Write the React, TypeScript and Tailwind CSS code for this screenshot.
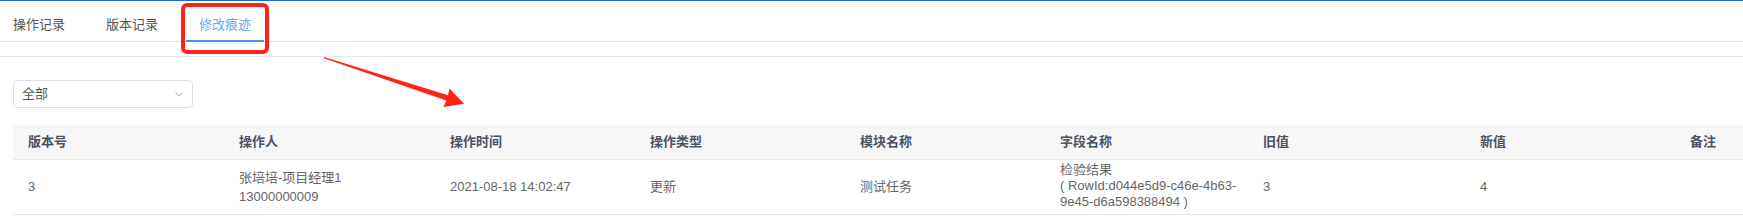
import React from "react";

const cols = [
  "版本号",
  "操作人",
  "操作时间",
  "操作类型",
  "模块名称",
  "字段名称",
  "旧值",
  "新值",
  "备注",
];

export default function App() {
  const font = { fontFamily: '"Liberation Sans", "Noto Sans CJK SC", sans-serif' };
  return (
    <div
      className="relative w-[1743px] h-[218px] bg-white overflow-hidden text-[13px]"
      style={font}
    >
      <div className="h-px bg-[#1a6fd6]" />
      {/* tabs */}
      <div className="flex h-[41px] border-b border-[#e2e2e2] gap-[15px]">
        <div className="h-full px-[13px] pt-[14px] leading-[20px] text-[#555]">操作记录</div>
        <div className="h-full px-[13px] pt-[14px] leading-[20px] text-[#555]">版本记录</div>
        <div className="relative h-full px-[13px] pt-[14px] leading-[20px] text-[#6ea4f2]">
          修改痕迹
          <div className="absolute left-0 right-0 bottom-[-1px] h-[2px] bg-[#4a94f0]" />
        </div>
      </div>
      <div className="h-[14px]" />
      <div className="h-px bg-[#e6e6e6]" />

      {/* select */}
      <div className="pl-[13px] pt-[23px]">
        <div className="flex items-center justify-between w-[180px] h-[28px] border border-[#dcdfe6] rounded-[4px] pl-[8px] pr-[9px]">
          <span className="text-[#555] leading-[20px]">全部</span>
          <svg width="8" height="5" viewBox="0 0 8 5" className="mt-[1px]">
            <path d="M0.5 0.5 L4 4 L7.5 0.5" fill="none" stroke="#a8abb2" strokeWidth="1" />
          </svg>
        </div>
      </div>

      {/* table */}
      <div className="ml-[13px] mt-[17px]">
        <div className="grid grid-cols-[211px_211px_200px_210px_200px_203px_217px_210px_1fr] h-[35px] bg-[#f7f7f7] border-b border-[#e8e8e8] items-center">
          {cols.map((c) => (
            <div key={c} className="pl-[15px] font-bold text-[#4b5262] leading-[20px] whitespace-nowrap">
              {c}
            </div>
          ))}
        </div>
        <div className="grid grid-cols-[211px_211px_200px_210px_200px_203px_217px_210px_1fr] h-[55px] border-b border-[#e4e4e4] items-center text-[#666]">
          <div className="pl-[15px] leading-[20px]">3</div>
          <div className="pl-[15px] leading-[19px] whitespace-nowrap">
            <div>张培培-项目经理1</div>
            <div>13000000009</div>
          </div>
          <div className="pl-[15px] leading-[20px] whitespace-nowrap">2021-08-18 14:02:47</div>
          <div className="pl-[15px] leading-[20px]">更新</div>
          <div className="pl-[15px] leading-[20px]">测试任务</div>
          <div className="pl-[15px] leading-[16px] whitespace-nowrap -mt-[2px]">
            <div>检验结果</div>
            <div>( RowId:d044e5d9-c46e-4b63-</div>
            <div>9e45-d6a598388494 )</div>
          </div>
          <div className="pl-[15px] leading-[20px]">3</div>
          <div className="pl-[15px] leading-[20px]">4</div>
          <div className="pl-[15px]" />
        </div>
      </div>

      {/* annotation overlays */}
      <div className="absolute left-[181px] top-[3px] w-[88px] h-[51px] border-[4px] border-[#ff2219] rounded-[6px] pointer-events-none" />
      <svg
        className="absolute left-0 top-0 pointer-events-none"
        width="1743"
        height="218"
        viewBox="0 0 1743 218"
      >
        <polygon
          points="324,57 448,95.3 449.5,88.5 464,103.8 443.5,107 446.3,100.5 324,58.2"
          fill="#ff2219"
        />
      </svg>
    </div>
  );
}
